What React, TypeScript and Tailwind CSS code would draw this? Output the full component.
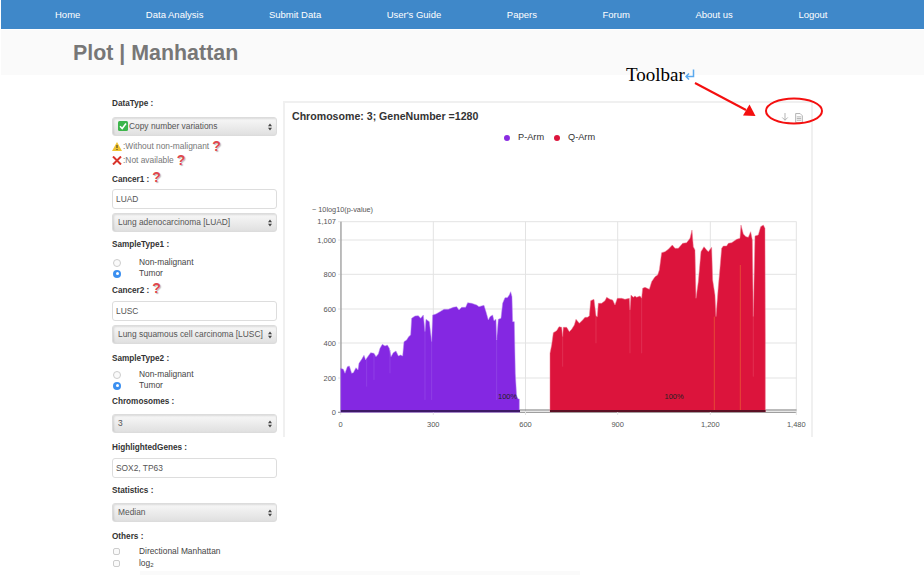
import { ReactNode } from "react";

const navItems = ["Home", "Data Analysis", "Submit Data", "User's Guide", "Papers", "Forum", "About us", "Logout"];

// outlines traced in crop coordinates (3x), placed with a transform below
const purpleArea =
  "122,637 122,505 130,508 135,520 142,500 148,498 155,520 160,518 168,503 174,510 177,490 185,478 192,466 197,480 200,475 207,465 212,458 222,460 228,470 235,462 240,445 247,433 255,438 262,435 268,445 273,470 280,458 288,453 295,468 302,465 308,468 312,425 320,420 326,410 332,405 335,355 345,348 355,347 362,355 370,345 375,395 378,358 388,365 395,425 398,345 408,342 420,335 432,328 445,328 460,322 470,320 477,330 485,322 497,322 503,308 515,310 530,315 537,320 552,316 558,335 565,360 570,350 578,345 582,362 588,358 590,420 595,358 603,355 608,310 615,293 622,293 628,285 632,275 636,290 638,365 643,365 646,520 650,590 655,597 658,597 658,637";

const redArea =
  "30,605 30,430 35,405 40,368 50,362 57,350 65,352 68,380 70,352 80,352 88,365 95,358 103,345 108,328 118,340 128,330 135,322 142,322 148,318 152,272 162,268 168,318 172,320 175,280 185,280 195,272 200,262 210,268 218,270 225,285 232,265 245,265 255,268 268,265 270,300 273,255 280,262 285,258 290,262 300,258 305,265 308,235 315,232 328,238 335,215 345,200 353,195 358,180 365,128 375,125 385,118 397,105 405,115 415,115 428,100 440,98 450,85 456,60 460,110 465,120 468,265 475,215 483,125 492,110 500,120 505,125 515,112 518,210 525,255 528,320 535,230 540,175 545,115 550,108 560,108 565,100 575,98 590,88 600,85 603,45 610,72 618,80 625,82 632,65 637,90 640,320 645,78 655,75 662,50 670,45 675,55 676,385 676,605";

const yTicks = [
  { label: "1,107", y: 221.7 },
  { label: "1,000", y: 240 },
  { label: "800", y: 274.3 },
  { label: "600", y: 309 },
  { label: "400", y: 343 },
  { label: "200", y: 378 },
  { label: "0", y: 412.3 },
];

const xTicks = [
  { label: "0", x: 340.7 },
  { label: "300", x: 433.3 },
  { label: "600", x: 525.5 },
  { label: "900", x: 617.7 },
  { label: "1,200", x: 710.3 },
  { label: "1,480", x: 796.3 },
];

function Label({ children, className = "" }: { children: ReactNode; className?: string }) {
  return <div className={`h-3 text-[8.2px] leading-3 font-bold text-[#333] ${className}`}>{children}</div>;
}

function Help() {
  return (
    <span className="ml-[3px] inline-block text-[14px] leading-3 font-bold text-[#e0474c] [text-shadow:1px_1px_1px_#bbb]">?</span>
  );
}

function SelectBox({ value, className = "", check }: { value: string; className?: string; check?: boolean }) {
  return (
    <div className={`flex h-[19px] w-[165px] items-center justify-between rounded-[3px] border border-[#dcdcdc] bg-gradient-to-b from-[#f8f8f8] to-[#e0e0e0] pr-[3px] pl-[5px] text-[8.4px] text-[#555] shadow-[inset_1px_1px_2px_rgba(0,0,0,0.12)] ${className}`}>
      <span className="flex items-center gap-[1px] whitespace-nowrap">
        {check && (
          <svg width="10" height="10" viewBox="0 0 10 10">
            <rect width="10" height="10" rx="1.5" fill="#3cb54a" />
            <path d="M2 5.2 4.2 7.5 8 2.5" fill="none" stroke="#fff" strokeWidth="1.5" />
          </svg>
        )}
        {value}
      </span>
      <svg width="4" height="8" viewBox="0 0 5 9" className="mr-[1px]">
        <path d="M2.5 0 5 3.5H0zM2.5 9 5 5.500H0z" fill="#444" />
      </svg>
    </div>
  );
}

function TextBox({ value, className = "" }: { value: string; className?: string }) {
  return (
    <div className={`flex h-[20px] w-[165px] items-center rounded-[3px] border border-[#ddd] bg-white pl-[3px] text-[8.4px] text-[#555] ${className}`}>
      {value}
    </div>
  );
}

function RadioRow({ label, on, className = "" }: { label: string; on?: boolean; className?: string }) {
  return (
    <div className={`flex h-[11px] items-center pl-[1px] text-[8.4px] text-[#444] ${className}`}>
      {on ? (
        <span className="flex h-2 w-2 items-center justify-center rounded-full bg-[#3b8ff0]">
          <span className="h-[3px] w-[3px] rounded-full bg-white" />
        </span>
      ) : (
        <span className="h-2 w-2 rounded-full border border-[#ccc] bg-[#fafafa]" />
      )}
      <span className="ml-[18px]">{label}</span>
    </div>
  );
}

function CheckRow({ children, className = "" }: { children: ReactNode; className?: string }) {
  return (
    <div className={`flex h-3 items-center pl-[1px] text-[8.4px] text-[#444] ${className}`}>
      <span className="h-[7px] w-[7px] rounded-[2px] border border-[#ccc] bg-[#fafafa]" />
      <span className="ml-[19px]">{children}</span>
    </div>
  );
}

function Sidebar() {
  return (
    <div className="flex w-[165px] flex-col pt-[23px]">
      <Label>DataType :</Label>
      <SelectBox value="Copy number variations" check className="mt-[7px] pl-[5px]" />
      <div className="mt-[4px] flex h-3 items-center text-[8.4px] text-[#777]">
        <svg width="10" height="9" viewBox="0 0 10 9">
          <path d="M5 0 10 9H0z" fill="#f0c330" />
          <path d="M5 3v3M5 7v1" stroke="#333" strokeWidth="1" />
        </svg>
        <span className="ml-[1px]">:Without non-malignant</span>
        <Help />
      </div>
      <div className="mt-[2px] flex h-3 items-center text-[8.4px] text-[#777]">
        <svg width="10" height="9" viewBox="0 0 10 9">
          <path d="M1 .5 9 8.500M9 .5 1 8.500" stroke="#d9342b" strokeWidth="2" />
        </svg>
        <span className="ml-[1px]">:Not available</span>
        <Help />
      </div>
      <Label className="mt-[5px]">
        Cancer1 :<Help />
      </Label>
      <TextBox value="LUAD" className="mt-[6px]" />
      <SelectBox value="Lung adenocarcinoma [LUAD]" className="mt-[4px]" />
      <Label className="mt-[7px]">SampleType1 :</Label>
      <RadioRow label="Non-malignant" className="mt-[6px]" />
      <RadioRow label="Tumor" on />
      <Label className="mt-[3px]">
        Cancer2 :<Help />
      </Label>
      <TextBox value="LUSC" className="mt-[7px]" />
      <SelectBox value="Lung squamous cell carcinoma [LUSC]" className="mt-[4px]" />
      <Label className="mt-[9px]">SampleType2 :</Label>
      <RadioRow label="Non-malignant" className="mt-[4px]" />
      <RadioRow label="Tumor" on />
      <Label className="mt-[5px]">Chromosomes :</Label>
      <SelectBox value="3" className="mt-[6px]" />
      <Label className="mt-[9px]">HighlightedGenes :</Label>
      <TextBox value="SOX2, TP63" className="mt-[4px]" />
      <Label className="mt-[7px]">Statistics :</Label>
      <SelectBox value="Median" className="mt-[6px]" />
      <Label className="mt-[9px]">Others :</Label>
      <CheckRow className="mt-[2px]">Directional Manhattan</CheckRow>
      <CheckRow>
        log<sub className="text-[6px]">2</sub>
      </CheckRow>
    </div>
  );
}

function ManhattanChart() {
  return (
    <svg viewBox="285 200 526 237" width="526" height="237" className="mt-auto block" fontFamily="'Liberation Sans', Arial, sans-serif">
      <text x="312" y="212" fontSize="7.300" fill="#555">− 10log10(p-value)</text>
      {yTicks.map((t) => (
        <g key={t.label}>
          <line x1="338" x2="796.500" y1={t.y} y2={t.y} stroke={t.y > 412 ? "#888" : "#e3e3e3"} strokeWidth="1" />
          <text x="336" y={t.y + 2.5} fontSize="7.500" textAnchor="end" fill="#555">{t.label}</text>
        </g>
      ))}
      {xTicks.map((t) => (
        <g key={t.label}>
          <line x1={t.x} x2={t.x} y1="221.700" y2="415" stroke="#e3e3e3" strokeWidth="1" />
          <text x={t.x} y="427" fontSize="7.500" textAnchor="middle" fill="#555">{t.label}</text>
        </g>
      ))}
      <line x1="341" x2="341" y1="221.700" y2="413" stroke="#888" />
      <line x1="341" x2="796.500" y1="410" y2="410" stroke="#777" />
      <g transform="translate(300 200) scale(0.3333)">
        <polygon points={purpleArea} fill="#8428e2" stroke="#b98cf0" strokeWidth="1.500" />
        <path d="M375 395V600M395 425V600M590 420V600M200 480V560M222 465V540M270 450V520" stroke="#9a55e8" strokeWidth="1.500" />
      </g>
      <g transform="translate(540 210) scale(0.3333)">
        <polygon points={redArea} fill="#dc143c" stroke="#ec7d92" strokeWidth="1.500" />
        <path d="M68 380V470M168 318V400M270 300V430M305 265V430M640 320V500" stroke="#e64a68" strokeWidth="1.500" />
        <path d="M523 320V605M601 165V605" stroke="#f08030" strokeWidth="1.500" />
      </g>
      <rect x="341" y="410" width="179" height="2" fill="#3d1a66" />
      <rect x="550" y="410" width="215.500" height="2" fill="#5c1024" />
      <text x="498" y="398.500" fontSize="7.500" fill="#222">100%</text>
      <text x="664.500" y="398.500" fontSize="7.500" fill="#222">100%</text>
    </svg>
  );
}

function ChartPanel() {
  return (
    <div className="mt-[26px] ml-[6px] flex h-[336px] w-[530px] flex-col border-t-2 border-r-2 border-l-2 border-[#f0f0f0]">
      <div className="flex items-start justify-between pt-[7px] pr-[8px] pl-[7px]">
        <div className="text-[10.6px] leading-[13px] font-bold text-[#333]">Chromosome: 3; GeneNumber =1280</div>
        <div className="mt-[3px] flex gap-[5px]">
          <svg width="10" height="10" viewBox="0 0 9 9" fill="none" stroke="#aaa" strokeWidth="0.800">
            <path d="M4.500 0V6.500M2 4l2.500 2.500L7 4M0.500 8.500H8.500" />
          </svg>
          <svg width="8" height="10" viewBox="0 0 7 9" fill="none" stroke="#aaa" strokeWidth="0.800">
            <path d="M.5.500H4.500L6.500 2.500V8.500H.5zM1.500 3.500H5.500M1.500 5H5.500M1.500 6.500H5.500" />
          </svg>
        </div>
      </div>
      <div className="mt-[9px] flex h-3 items-center pl-[219px] text-[9.2px] text-[#333]">
        <span className="h-[6px] w-[6px] rounded-full bg-[#8a2be2]" />
        <span className="ml-[8px]">P-Arm</span>
        <span className="ml-[10px] h-[6px] w-[6px] rounded-full bg-[#dc143c]" />
        <span className="ml-[8px]">Q-Arm</span>
      </div>
      <ManhattanChart />
    </div>
  );
}

export default function App() {
  return (
    <div className="relative h-[575px] w-[924px] overflow-hidden bg-white font-['Liberation_Sans',Arial,sans-serif]">
      <nav className="ml-[1px] flex h-[29px] items-center gap-[65.500px] bg-[#3f88c9] pt-[1px] pl-[54px] text-[9.5px] text-white">
        {navItems.map((item) => (
          <span key={item} className="whitespace-nowrap">{item}</span>
        ))}
      </nav>
      <div className="mt-[1px] ml-[1px] flex h-[45px] items-center bg-[#fafafa] pt-[2px] pl-[72px] text-[21.4px] font-bold text-[#777]">
        Plot | Manhattan
      </div>
      <div className="ml-[112px] flex items-start">
        <Sidebar />
        <ChartPanel />
      </div>

      {/* toolbar callout pasted over the shot */}
      <div className="absolute top-[63px] left-[626px] flex items-center font-['Liberation_Serif',serif] text-[19px] leading-6 text-black">
        Toolbar
        <svg width="10" height="12" viewBox="0 0 10 11" fill="none" stroke="#5aa9ee" strokeWidth="1.500">
          <path d="M8.500 0V7H1.500M4 4 1 7l3 3" />
        </svg>
      </div>
      <svg className="absolute top-[75px] left-[690px]" width="140" height="60" viewBox="690 75 140 60">
        <line x1="695" y1="83" x2="746" y2="110" stroke="#f40f0f" strokeWidth="2" />
        <polygon points="755.500,116 743,115.500 749.500,104.500" fill="#f40f0f" />
        <ellipse cx="794" cy="111" rx="28" ry="12.500" fill="none" stroke="#f40f0f" strokeWidth="2" />
      </svg>
      <div className="absolute bottom-0 left-[140px] h-[4px] w-[440px] bg-[#fafafa]" />
    </div>
  );
}
